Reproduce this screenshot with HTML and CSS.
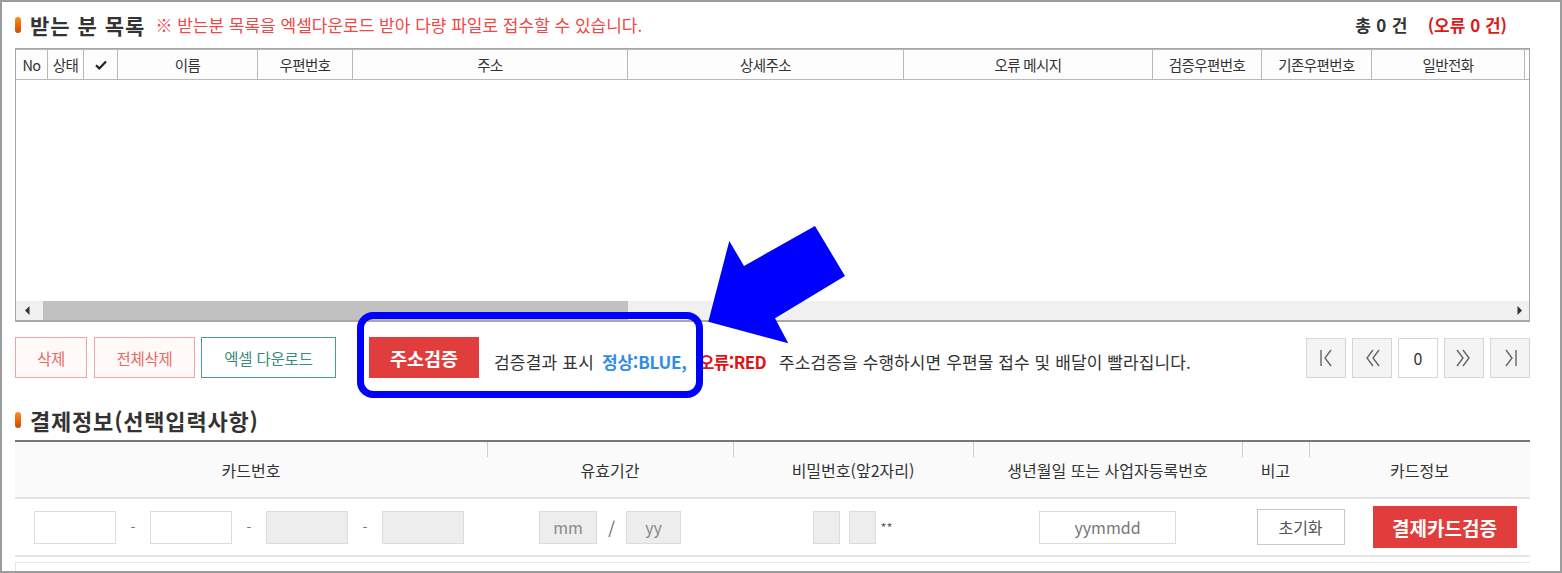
FILE: index.html
```html
<!DOCTYPE html>
<html lang="ko">
<head>
<meta charset="utf-8">
<title>받는 분 목록</title>
<link rel="stylesheet" href="styles.css">
</head>
<body>
<div class="frame">
  <div class="list-head">
    <span class="bullet"></span>
    <h2 class="title">받는 분 목록</h2>
    <span class="note">※ 받는분 목록을 엑셀다운로드 받아 다량 파일로 접수할 수 있습니다.</span>
    <span class="total">총 0 건</span>
    <span class="total-err">(오류 0 건)</span>
  </div>

  <div class="grid">
    <div class="ghead">
      <div class="c-no">No</div>
      <div class="c-st">상태</div>
      <div class="c-ck"><svg width="12" height="10" viewBox="0 0 12 10"><path d="M1 5.2 L4.3 8.4 L11 1.6" fill="none" stroke="#222" stroke-width="2.2"/></svg></div>
      <div class="c-nm">이름</div>
      <div class="c-zip">우편번호</div>
      <div class="c-addr">주소</div>
      <div class="c-det">상세주소</div>
      <div class="c-err">오류 메시지</div>
      <div class="c-vz">검증우편번호</div>
      <div class="c-oz">기존우편번호</div>
      <div class="c-tel">일반전화</div>
      <div class="c-more"></div>
    </div>
    <div class="gbody"></div>
    <div class="hscroll">
      <span class="sarrow"><svg width="5" height="9" viewBox="0 0 5 9"><path d="M4.5 0 L0 4.5 L4.5 9 Z" fill="#333"/></svg></span>
      <span class="thumb"></span>
      <span class="strack"></span>
      <span class="sarrow right"><svg width="5" height="9" viewBox="0 0 5 9"><path d="M0.5 0 L5 4.5 L0.5 9 Z" fill="#333"/></svg></span>
    </div>
  </div>

  <div class="actions">
    <button class="btn btn-del">삭제</button>
    <button class="btn btn-del btn-all">전체삭제</button>
    <button class="btn btn-xls">엑셀 다운로드</button>
    <button class="btn btn-verify">주소검증</button>
    <p class="desc">검증결과 표시 <b class="ok">정상:BLUE,</b><b class="bad">오류:RED</b><span class="tip">주소검증을 수행하시면 우편물 접수 및 배달이 빨라집니다.</span></p>
    <div class="pager">
      <span class="pg"><svg width="40" height="40" viewBox="0 0 40 40"><path d="M15 12 V28 M25 12 L19 20 L25 28" fill="none" stroke="#666" stroke-width="1.4"/></svg></span>
      <span class="pg"><svg width="40" height="40" viewBox="0 0 40 40"><path d="M21 12 L15 20 L21 28 M27 12 L21 20 L27 28" fill="none" stroke="#666" stroke-width="1.4"/></svg></span>
      <span class="pg pg-cur">0</span>
      <span class="pg"><svg width="40" height="40" viewBox="0 0 40 40"><path d="M13 12 L19 20 L13 28 M19 12 L25 20 L19 28" fill="none" stroke="#666" stroke-width="1.4"/></svg></span>
      <span class="pg"><svg width="40" height="40" viewBox="0 0 40 40"><path d="M16 12 L22 20 L16 28 M26 12 V28" fill="none" stroke="#666" stroke-width="1.4"/></svg></span>
    </div>
  </div>

  <div class="pay-head">
    <span class="bullet"></span>
    <h2 class="title2">결제정보(선택입력사항)</h2>
  </div>

  <div class="ptable">
    <div class="phead">
      <div class="pc p-card">카드번호</div>
      <div class="pc p-exp">유효기간</div>
      <div class="pc p-pw">비밀번호(앞2자리)</div>
      <div class="pc p-birth">생년월일 또는 사업자등록번호</div>
      <div class="pc p-note">비고</div>
      <div class="pc p-info">카드정보</div>
    </div>
    <div class="prow">
      <div class="rc r-card">
        <span class="inp w-card"></span><span class="dash">-</span>
        <span class="inp w-card"></span><span class="dash">-</span>
        <span class="inp w-card dis"></span><span class="dash">-</span>
        <span class="inp w-card dis"></span>
      </div>
      <div class="rc r-exp">
        <span class="inp dis w-mm">mm</span><span class="slash">/</span><span class="inp dis w-yy">yy</span>
      </div>
      <div class="rc r-pw">
        <span class="inp dis w-pw"></span><span class="inp dis w-pw pw2"></span><span class="stars">**</span>
      </div>
      <div class="rc r-birth">
        <span class="inp w-birth ph">yymmdd</span>
      </div>
      <div class="rc r-note">
        <button class="btn-reset">초기화</button>
      </div>
      <div class="rc r-info">
        <button class="btn-card">결제카드검증</button>
      </div>
    </div>
    <div class="pnext"></div>
  </div>

  <div class="highlight"></div>
  <svg class="arrow" width="150" height="130" viewBox="0 0 150 130"><polygon points="8.3,101.7 29.3,21 44,46 115,6 145,56 75,98.3 88.3,123.3" fill="#0000ff"/></svg>
</div>
</body>
</html>
```

FILE: styles.css
```css
* { box-sizing: border-box; }
body {
  margin: 0;
  font-family: "Noto Sans CJK KR", "Noto Sans", sans-serif;
  color: #333;
  background: #fff;
}
.frame {
  position: relative;
  width: 1562px;
  height: 573px;
  border: 2px solid #9c9c9c;
  padding-left: 13px;
  overflow: hidden;
  background: #fff;
}
.frame > div:not(.highlight) { width: 1515px; }

/* list head */
.list-head {
  display: flex;
  align-items: center;
  height: 46px;
}
.bullet {
  display: inline-block;
  width: 6px;
  height: 16px;
  border-radius: 3px;
  background: linear-gradient(#ff8d1c, #d24800);
  margin-right: 9px;
  flex: none;
}
.title {
  margin: 0;
  font-size: 21px;
  line-height: 24px;
  font-weight: 700;
  color: #333;
  letter-spacing: 1px;
}
.note {
  margin-left: 10px;
  font-size: 17px;
  line-height: 20px;
  color: #f04747;
  letter-spacing: 0;
}
.total {
  margin-left: auto;
  font-size: 17px;
  line-height: 20px;
  font-weight: 700;
  color: #333;
  letter-spacing: 0.3px;
}
.total-err {
  margin-left: 20px;
  margin-right: 23px;
  font-size: 17px;
  line-height: 20px;
  font-weight: 700;
  color: #dd1a1a;
}

/* grid */
.grid {
  height: 274px;
  border: 1px solid #a6a6a6;
  border-bottom: 2px solid #a8a8a8;
  display: flex;
  flex-direction: column;
}
.ghead {
  display: flex;
  height: 31px;
  border-top: 1px solid #b8b8b8;
  border-bottom: 1px solid #b8b8b8;
  background: #fdfdfd;
  flex: none;
}
.ghead > div {
  border-right: 1px solid #b8b8b8;
  font-size: 14.5px;
  line-height: 29px;
  text-align: center;
  color: #333;
  letter-spacing: -0.6px;
  display: flex;
  align-items: center;
  justify-content: center;
  flex: none;
}
.c-no { width: 32px; }
.c-st { width: 36px; }
.c-ck { width: 34px; }
.c-nm { width: 140px; }
.c-zip { width: 95px; }
.c-addr { width: 275px; }
.c-det { width: 276px; }
.c-err { width: 249px; }
.c-vz { width: 109px; }
.c-oz { width: 110px; }
.c-tel { width: 153px; }
.ghead > .c-more { flex: 1; border-right: none; }
.gbody { flex: 1; background: #fff; }
.hscroll {
  height: 19px;
  flex: none;
  display: flex;
  align-items: stretch;
  background: #f0f0f0;
}
.sarrow {
  width: 27px;
  display: flex;
  align-items: center;
  justify-content: center;
  padding-right: 4px;
}
.sarrow.right { width: 17px; padding-right: 2px; }
.thumb { width: 585px; background: #c1c1c1; }
.strack { flex: 1; }

/* actions */
.actions {
  display: flex;
  align-items: center;
  margin-top: 15px;
  height: 41px;
}
.btn {
  height: 41px;
  font-family: inherit;
  font-size: 15.5px;
  padding: 0;
  display: flex;
  align-items: center;
  justify-content: center;
  letter-spacing: -0.2px;
  background: #fff;
}
.btn-del {
  width: 72px;
  border: 1px solid #f2a3a3;
  background: #fffaf7;
  color: #e56a6a;
}
.btn-all { width: 101px; margin-left: 7px; }
.btn-xls {
  width: 135px;
  margin-left: 6px;
  border: 1px solid #4a9c8c;
  color: #3b8b7c;
}
.btn-verify {
  width: 110px;
  margin-left: 33px;
  border: none;
  background: #e23d3d;
  color: #fff;
  font-size: 18.5px;
  font-weight: 700;
  letter-spacing: 0;
}
.desc {
  margin: 8px 0 0 15px;
  font-size: 17px;
  line-height: 22px;
  color: #333;
  letter-spacing: 0.2px;
  white-space: nowrap;
}
.ok { color: #2f8de6; font-weight: 600; margin-left: 3px; letter-spacing: -0.2px; }
.bad { color: #e01414; font-weight: 700; margin-left: 12px; letter-spacing: -0.6px; }
.tip { margin-left: 13px; letter-spacing: 0.1px; }
.pager {
  margin-left: auto;
  display: flex;
  gap: 6px;
}
.pg {
  width: 40px;
  height: 40px;
  border: 1px solid #d6d6d6;
  background: #f4f4f4;
  display: flex;
  align-items: center;
  justify-content: center;
}
.pg svg { flex: none; }
.pg-cur {
  background: #fff;
  font-size: 16px;
  color: #333;
}

/* pay section */
.pay-head {
  display: flex;
  align-items: center;
  margin-top: 30px;
  height: 24px;
}
.title2 {
  margin: 0;
  font-size: 22px;
  line-height: 24px;
  font-weight: 700;
  color: #333;
  letter-spacing: 0.8px;
}
.ptable {
  margin-top: 8px;
  border-top: 2px solid #777;
}
.phead {
  display: flex;
  height: 57px;
  background: #fafafa;
  border-bottom: 2px solid #e3e3e3;
}
.pc {
  position: relative;
  display: flex;
  align-items: center;
  justify-content: center;
  font-size: 16px;
  color: #333;
  letter-spacing: 0;
}
.pc + .pc::before {
  content: "";
  position: absolute;
  left: 0;
  top: 0;
  width: 1px;
  height: 15px;
  background: #cfcfcf;
}
.p-card, .r-card { width: 472px; }
.p-exp, .r-exp { width: 246px; }
.p-pw, .r-pw { width: 240px; }
.p-birth, .r-birth { width: 269px; }
.p-note { width: 67px; }
.p-info { width: 221px; }
.r-note { width: 117px; }
.r-info { width: 171px; }
.prow {
  display: flex;
  height: 58px;
  align-items: center;
  border-bottom: 2px solid #e6e6e6;
}
.rc {
  display: flex;
  align-items: center;
  justify-content: center;
}
.r-card { justify-content: flex-start; padding-left: 19px; }
.inp {
  height: 33px;
  border: 1px solid #dcdcdc;
  background: #fff;
  display: flex;
  align-items: center;
  justify-content: center;
  font-size: 16px;
  color: #888;
}
.inp.dis { background: #ededed; }
.w-card { width: 82px; }
.dash {
  width: 34px;
  text-align: center;
  color: #777;
  font-size: 14px;
}
.w-mm { width: 58px; }
.w-yy { width: 55px; }
.slash {
  width: 29px;
  text-align: center;
  color: #666;
  font-size: 17px;
}
.w-pw { width: 27px; }
.pw2 { margin-left: 9px; }
.stars {
  margin-left: 5px;
  width: 13px;
  font-size: 13px;
  color: #666;
}
.w-birth { width: 137px; color: #777; }
.btn-reset {
  width: 88px;
  height: 36px;
  border: 1px solid #c8c8c8;
  background: #fff;
  font-family: inherit;
  font-size: 16px;
  color: #555;
  padding: 0;
}
.btn-card {
  width: 144px;
  height: 42px;
  border: none;
  background: #e23d3d;
  color: #fff;
  font-family: inherit;
  font-size: 19px;
  font-weight: 700;
  padding: 0;
  letter-spacing: 0;
}
.pnext {
  margin-top: 5px;
  height: 20px;
  border-top: 1px solid #e6e6e6;
  border-left: 1px solid #e6e6e6;
}

/* overlays */
.highlight {
  position: absolute;
  left: 355px;
  top: 310px;
  width: 346px;
  height: 86px;
  border: 7px solid #0000ff;
  border-radius: 16px;
}
.arrow {
  position: absolute;
  left: 698px;
  top: 218px;
}
```
